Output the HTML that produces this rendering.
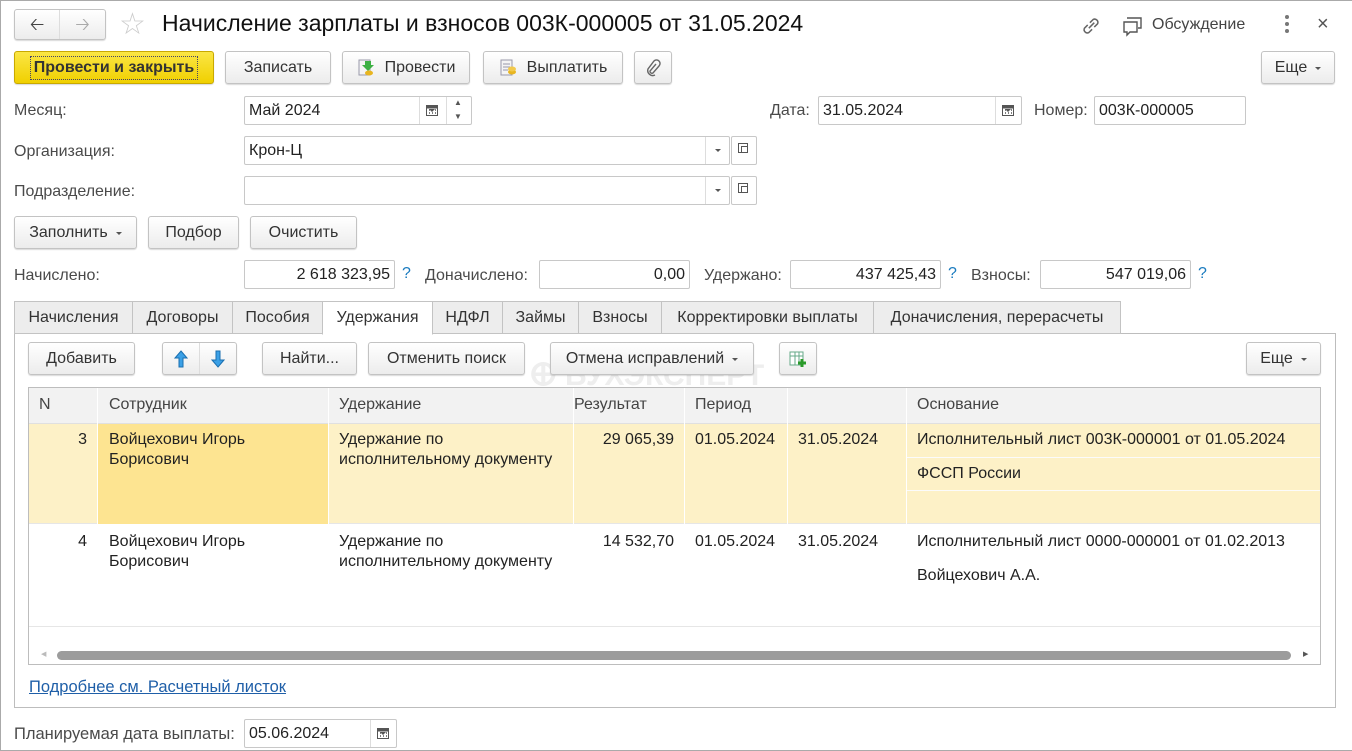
<!DOCTYPE html>
<html><head><meta charset="utf-8"><style>
*{box-sizing:border-box;margin:0;padding:0}
body{width:1352px;height:751px;background:#fff;font-family:"Liberation Sans",Arial,sans-serif;font-size:16px;color:#333;position:relative;overflow:hidden}
.a{position:absolute;white-space:nowrap}
.btn{position:absolute;height:33px;border:1px solid #c3c3c3;border-radius:3px;background:linear-gradient(#fff,#ececec);box-shadow:0 1px 1px rgba(0,0,0,.15);display:flex;align-items:center;justify-content:center;color:#333;font-size:16px;white-space:nowrap}
.inp{position:absolute;height:29px;border:1px solid #c8c8c8;border-radius:2px;background:#fff;padding:0 4px;display:flex;align-items:center;color:#222;font-size:16px}
.lbl{position:absolute;color:#4a4a4a;white-space:nowrap;font-size:16px}
.dd{position:absolute;top:0;bottom:0;width:25px;border-left:1px solid #ddd}
.dd:after{content:"";position:absolute;left:9px;top:12px;border:3px solid transparent;border-top:3px solid #555}
.q{position:absolute;color:#1a7bbf;font-size:16px}
.tab{position:absolute;top:301px;height:33px;border:1px solid #c3c3c3;background:#ededed;display:flex;align-items:center;justify-content:center;color:#333}
.arr:after{content:"";display:inline-block;margin-left:8px;border:3px solid transparent;border-top:3px solid #555;vertical-align:middle;position:relative;top:2px}
.cell{position:absolute;color:#222;line-height:20px;font-size:16px}
.vl{position:absolute;width:1px;background:#e4e4e4}
</style></head><body>
<div class="a" style="left:0;top:0;width:1352px;height:751px;border:1px solid #aaa;border-right:none"></div>

<!-- title bar -->
<div class="btn" style="left:14px;top:9px;width:92px;height:31px;justify-content:flex-start;padding:0">
<div style="width:46px;text-align:center;border-right:1px solid #ddd;line-height:29px;font-size:18px;color:#444">&#129120;</div><div style="width:46px;text-align:center;line-height:29px;font-size:18px;color:#aaa">&#129122;</div></div>
<div class="a" style="left:119px;top:7px;font-size:30px;color:#ccc">☆</div>
<div class="a" style="left:162px;top:10px;font-size:23px;color:#111">Начисление зарплаты и взносов 003К-000005 от 31.05.2024</div>
<svg class="a" style="left:1079px;top:14px" width="24" height="24" viewBox="0 0 22 22" fill="none" stroke="#666" stroke-width="1.4"><path d="M9 13l5-5M8 10l-3 3a3 3 0 004 4l3-3M14 12l3-3a3 3 0 00-4-4l-3 3"/></svg>
<svg class="a" style="left:1122px;top:15px" width="22" height="22" viewBox="0 0 22 22" fill="none" stroke="#555" stroke-width="1.4"><path d="M5 3h14v10h-3M2 7h13v10H8l-3 3v-3H2z"/></svg>
<div class="a" style="left:1152px;top:16px;color:#444;font-size:16px">Обсуждение</div>
<div class="a" style="left:1285px;top:15px;width:4px"><div style="width:4px;height:4px;border-radius:2px;background:#777;margin-bottom:3px"></div><div style="width:4px;height:4px;border-radius:2px;background:#777;margin-bottom:3px"></div><div style="width:4px;height:4px;border-radius:2px;background:#777"></div></div>
<div class="a" style="left:1317px;top:13px;font-size:20px;color:#555">×</div>

<!-- toolbar -->
<div class="btn" style="left:14px;top:51px;width:200px;background:linear-gradient(#fbe645,#f0d000);border-color:#c9a900;font-weight:bold;color:#333;font-size:16px"><span style="outline:1px dotted #446;padding:2px 3px">Провести и закрыть</span></div>
<div class="btn" style="left:225px;top:51px;width:106px">Записать</div>
<div class="btn" style="left:342px;top:51px;width:128px"><svg width="20" height="20" viewBox="0 0 20 20" style="margin-right:8px"><rect x="2" y="2" width="11" height="15" fill="#f4f4f4" stroke="#99a"/><path d="M8 3h6v4h3l-6 6-6-6h3z" fill="#3cb043"/><ellipse cx="12" cy="15" rx="4" ry="2.5" fill="#e8b520"/></svg>Провести</div>
<div class="btn" style="left:483px;top:51px;width:140px"><svg width="20" height="20" viewBox="0 0 20 20" style="margin-right:8px"><rect x="2" y="2" width="11" height="15" fill="#f4f4f4" stroke="#99a"/><path d="M4 6h7M4 9h7M4 12h5" stroke="#99a"/><ellipse cx="13" cy="14" rx="4" ry="2.5" fill="#e8b520"/><ellipse cx="13" cy="11" rx="4" ry="2.5" fill="#f2c94c"/></svg>Выплатить</div>
<div class="btn" style="left:634px;top:51px;width:38px"><svg width="16" height="18" viewBox="0 0 16 18" fill="none" stroke="#666" stroke-width="1.4"><path d="M11 5l-6 7a2 2 0 003 2l6-7a3.5 3.5 0 00-5-5L3 10a5 5 0 007 6"/></svg></div>
<div class="btn arr" style="left:1261px;top:51px;width:74px">Еще</div>

<!-- fields -->
<div class="lbl" style="left:14px;top:102px">Месяц:</div>
<div class="inp" style="left:244px;top:96px;width:228px">Май 2024
<div class="dd" style="left:174px;width:27px;border-left:1px solid #ddd"></div></div>
<svg class="a" style="left:425px;top:103px" width="14" height="14" viewBox="0 0 14 14"><rect x="1.5" y="2.5" width="11" height="10" fill="none" stroke="#555"/><rect x="1.5" y="2.5" width="11" height="3" fill="#555"/><path d="M4 7h1M7 7h1M10 7h1M4 10h1M7 10h1M10 10h1" stroke="#555" stroke-width="1.5"/></svg>
<div class="a" style="left:446px;top:97px;width:1px;height:27px;background:#ddd"></div>
<div class="a" style="left:454px;top:98px;font-size:8px;color:#555">▲</div>
<div class="a" style="left:454px;top:112px;font-size:8px;color:#555">▼</div>

<div class="lbl" style="left:770px;top:102px">Дата:</div>
<div class="inp" style="left:818px;top:96px;width:204px">31.05.2024<div class="dd" style="left:176px;width:27px;border-left:1px solid #ddd"></div></div>
<svg class="a" style="left:1001px;top:103px" width="14" height="14" viewBox="0 0 14 14"><rect x="1.5" y="2.5" width="11" height="10" fill="none" stroke="#555"/><rect x="1.5" y="2.5" width="11" height="3" fill="#555"/><path d="M4 7h1M7 7h1M10 7h1M4 10h1M7 10h1M10 10h1" stroke="#555" stroke-width="1.5"/></svg>
<div class="lbl" style="left:1034px;top:102px">Номер:</div>
<div class="inp" style="left:1094px;top:96px;width:152px">003К-000005</div>

<div class="lbl" style="left:14px;top:143px">Организация:</div>
<div class="inp" style="left:244px;top:136px;width:486px">Крон-Ц<div class="dd" style="left:460px"></div></div>
<div class="inp" style="left:731px;top:136px;width:26px"></div><div class="a" style="left:738px;top:143px;width:10px;height:10px;border:1px solid #555"></div><div class="a" style="left:741px;top:146px;width:7px;height:7px;border:1px solid #555;background:#fff"></div>

<div class="lbl" style="left:14px;top:183px">Подразделение:</div>
<div class="inp" style="left:244px;top:176px;width:486px"><div class="dd" style="left:460px"></div></div>
<div class="inp" style="left:731px;top:176px;width:26px"></div><div class="a" style="left:738px;top:183px;width:10px;height:10px;border:1px solid #555"></div><div class="a" style="left:741px;top:186px;width:7px;height:7px;border:1px solid #555;background:#fff"></div>

<div class="btn arr" style="left:14px;top:216px;width:123px">Заполнить</div>
<div class="btn" style="left:148px;top:216px;width:91px">Подбор</div>
<div class="btn" style="left:250px;top:216px;width:107px">Очистить</div>

<div class="lbl" style="left:14px;top:267px">Начислено:</div>
<div class="inp" style="left:244px;top:260px;width:151px;justify-content:flex-end">2 618 323,95</div>
<div class="q" style="left:402px;top:265px">?</div>
<div class="lbl" style="left:425px;top:267px">Доначислено:</div>
<div class="inp" style="left:539px;top:260px;width:151px;justify-content:flex-end">0,00</div>
<div class="lbl" style="left:704px;top:267px">Удержано:</div>
<div class="inp" style="left:790px;top:260px;width:151px;justify-content:flex-end">437 425,43</div>
<div class="q" style="left:948px;top:265px">?</div>
<div class="lbl" style="left:971px;top:267px">Взносы:</div>
<div class="inp" style="left:1040px;top:260px;width:151px;justify-content:flex-end">547 019,06</div>
<div class="q" style="left:1198px;top:265px">?</div>

<!-- tabs -->
<div class="a" style="left:14px;top:333px;width:1322px;height:375px;border:1px solid #bdbdbd"></div>
<div class="tab" style="left:14px;width:119px">Начисления</div>
<div class="tab" style="left:132px;width:101px">Договоры</div>
<div class="tab" style="left:232px;width:91px">Пособия</div>
<div class="tab" style="left:322px;width:111px;background:#fff;border-bottom-color:#fff;height:34px">Удержания</div>
<div class="tab" style="left:432px;width:71px">НДФЛ</div>
<div class="tab" style="left:502px;width:77px">Займы</div>
<div class="tab" style="left:578px;width:84px">Взносы</div>
<div class="tab" style="left:661px;width:213px">Корректировки выплаты</div>
<div class="tab" style="left:873px;width:248px">Доначисления, перерасчеты</div>

<div class="btn" style="left:28px;top:342px;width:107px">Добавить</div>
<div class="btn" style="left:162px;top:342px;width:75px;padding:0"><div style="width:37px;text-align:center;border-right:1px solid #ddd;height:100%;display:flex;align-items:center;justify-content:center"><svg width="14" height="18" viewBox="0 0 14 18"><path d="M7 1l6 7H9v9H5V8H1z" fill="#3ba0e6" stroke="#1a6fb0"/></svg></div><div style="width:37px;display:flex;align-items:center;justify-content:center"><svg width="14" height="18" viewBox="0 0 14 18"><path d="M7 17l6-7H9V1H5v9H1z" fill="#3ba0e6" stroke="#1a6fb0"/></svg></div></div>
<div class="btn" style="left:262px;top:342px;width:95px">Найти...</div>
<div class="btn" style="left:368px;top:342px;width:157px">Отменить поиск</div>
<div class="a" style="left:530px;top:358px;font-size:30px;font-weight:bold;color:#eee">ⴲ БУХЭКСПЕРТ</div>
<div class="btn arr" style="left:550px;top:342px;width:204px">Отмена исправлений</div>
<div class="btn" style="left:779px;top:342px;width:38px"><svg width="20" height="20" viewBox="0 0 20 20"><rect x="2" y="3" width="13" height="13" fill="#fff" stroke="#6a8"/><path d="M2 7h13M7 3v13M11 3v13" stroke="#6a8"/><path d="M14 10v8M10 14h8" stroke="#2a9a2a" stroke-width="3"/></svg></div>
<div class="btn arr" style="left:1246px;top:342px;width:75px">Еще</div>

<!-- table -->
<div class="a" style="left:28px;top:387px;width:1293px;height:278px;border:1px solid #bdbdbd;overflow:hidden">
 <div class="a" style="left:0;top:0;width:1293px;height:36px;background:#f2f2f2;border-bottom:1px solid #e0e0e0"></div>
 <div class="a" style="left:0;top:36px;width:1293px;height:100px;background:#fdf1c7;border-bottom:1px solid #e6e6e6"></div>
 <div class="a" style="left:69px;top:36px;width:230px;height:100px;background:#fde491"></div>
 <div class="a" style="left:877px;top:69px;width:416px;height:1px;background:#fbfbfb"></div>
 <div class="a" style="left:877px;top:102px;width:416px;height:1px;background:#fbfbfb"></div>
 <div class="a" style="left:0;top:238px;width:1293px;height:1px;background:#e6e6e6"></div>
 <div class="vl" style="left:68px;top:0;height:136px;background:#fff"></div>
 <div class="vl" style="left:299px;top:0;height:136px;background:#fff"></div>
 <div class="vl" style="left:544px;top:0;height:136px;background:#fff"></div>
 <div class="vl" style="left:655px;top:0;height:136px;background:#fff"></div>
 <div class="vl" style="left:758px;top:0;height:136px;background:#fff"></div>
 <div class="vl" style="left:877px;top:0;height:136px;background:#fff"></div>
 <div class="cell" style="left:10px;top:7px;color:#444">N</div>
 <div class="cell" style="left:80px;top:7px;color:#444">Сотрудник</div>
 <div class="cell" style="left:310px;top:7px;color:#444">Удержание</div>
 <div class="cell" style="left:545px;top:7px;color:#444">Результат</div>
 <div class="cell" style="left:666px;top:7px;color:#444">Период</div>
 <div class="cell" style="left:888px;top:7px;color:#444">Основание</div>

 <div class="cell" style="left:0;width:58px;text-align:right;top:42px">3</div>
 <div class="cell" style="left:80px;top:42px">Войцехович Игорь<br>Борисович</div>
 <div class="cell" style="left:310px;top:42px">Удержание по<br>исполнительному документу</div>
 <div class="cell" style="left:545px;width:100px;text-align:right;top:42px">29 065,39</div>
 <div class="cell" style="left:666px;top:42px">01.05.2024</div>
 <div class="cell" style="left:769px;top:42px">31.05.2024</div>
 <div class="cell" style="left:888px;top:42px">Исполнительный лист 003К-000001 от 01.05.2024</div>
 <div class="cell" style="left:888px;top:76px">ФССП России</div>

 <div class="cell" style="left:0;width:58px;text-align:right;top:144px">4</div>
 <div class="cell" style="left:80px;top:144px">Войцехович Игорь<br>Борисович</div>
 <div class="cell" style="left:310px;top:144px">Удержание по<br>исполнительному документу</div>
 <div class="cell" style="left:545px;width:100px;text-align:right;top:144px">14 532,70</div>
 <div class="cell" style="left:666px;top:144px">01.05.2024</div>
 <div class="cell" style="left:769px;top:144px">31.05.2024</div>
 <div class="cell" style="left:888px;top:144px">Исполнительный лист 0000-000001 от 01.02.2013</div>
 <div class="cell" style="left:888px;top:178px">Войцехович А.А.</div>

 <div class="a" style="left:28px;top:263px;width:1234px;height:9px;border-radius:5px;background:#9c9c9c"></div>
 <div class="a" style="left:12px;top:262px;font-size:7px;color:#bbb">◀</div>
 <div class="a" style="left:1274px;top:262px;font-size:7px;color:#555">▶</div>
</div>

<div class="a" style="left:29px;top:678px;color:#1f5fa8;text-decoration:underline;font-size:16.5px">Подробнее см. Расчетный листок</div>

<div class="lbl" style="left:14px;top:725px;font-size:16.5px">Планируемая дата выплаты:</div>
<div class="inp" style="left:244px;top:719px;width:153px">05.06.2024<div class="dd" style="left:125px;width:27px;border-left:1px solid #ddd"></div></div>
<svg class="a" style="left:376px;top:726px" width="14" height="14" viewBox="0 0 14 14"><rect x="1.5" y="2.5" width="11" height="10" fill="none" stroke="#555"/><rect x="1.5" y="2.5" width="11" height="3" fill="#555"/><path d="M4 7h1M7 7h1M10 7h1M4 10h1M7 10h1M10 10h1" stroke="#555" stroke-width="1.5"/></svg>
</body></html>
